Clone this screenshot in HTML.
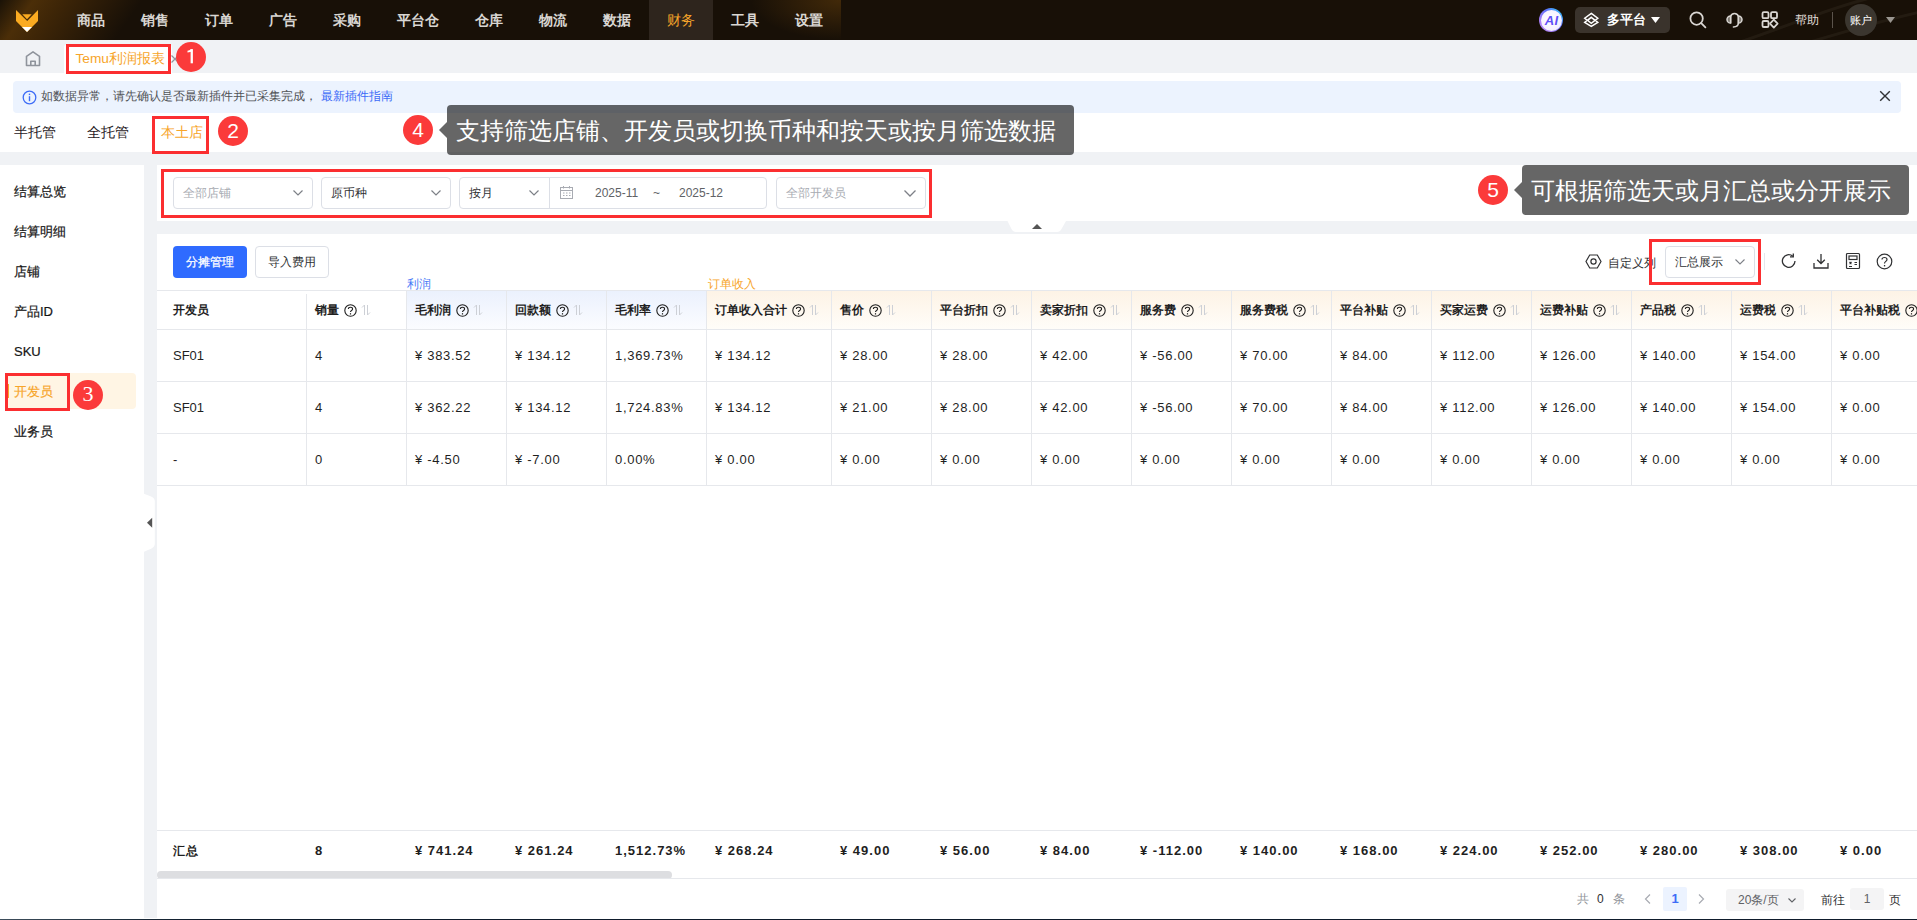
<!DOCTYPE html>
<html><head><meta charset="utf-8">
<style>
*{box-sizing:border-box;margin:0;padding:0}
html,body{width:1917px;height:920px;overflow:hidden;background:#f0f2f5;font-family:"Liberation Sans",sans-serif;color:#303133}
.a{position:absolute}
.t{position:absolute;white-space:nowrap;line-height:1}
#top{left:0;top:0;width:1917px;height:40px;background:#181007;overflow:hidden}
.nav{top:0;height:40px;line-height:40px;font-size:14px;font-weight:bold;color:#d9d6d2;text-align:center}
.circ{position:absolute;width:30px;height:30px;border-radius:50%;background:#fb3a3a;color:#fff;font-size:21px;line-height:30px;text-align:center}
.rbox{position:absolute;border:3px solid #fb2e30}
.tip{position:absolute;background:rgba(0,0,0,.6);border-radius:4px;color:#fff;font-size:24px;line-height:52px;white-space:nowrap}
.tip:before{content:"";position:absolute;left:-8px;top:17px;border-right:8px solid rgba(0,0,0,.6);border-top:8px solid transparent;border-bottom:8px solid transparent}
.menu{position:absolute;left:14px;font-size:13px;font-weight:normal;-webkit-text-stroke:.2px currentColor;color:#151515;line-height:16px}
.sel{position:absolute;top:177px;height:32px;border:1px solid #dcdfe6;border-radius:4px;background:#fff}
.sel .tx{position:absolute;left:9px;top:0;line-height:30px;font-size:12px;color:#303133}
.sel .ph{color:#a8abb2}
.chev{position:absolute}
.hl{left:157px;width:1760px;height:1px;background:#e6e8ec}
.vl{width:1px;background:#e6e8ec}
.th{height:39px;display:flex;align-items:center;font-size:12px;font-weight:bold;color:#1f1f1f;white-space:nowrap;padding-top:1px}
.th .q{margin-left:5px}
.th .srt{margin-left:4px}
.td{height:52px;line-height:52px;padding-top:1px;font-size:13px;color:#1f1f1f;white-space:nowrap;letter-spacing:.7px}
.tf{height:41px;line-height:41px;padding-top:0;font-size:13px;font-weight:bold;color:#1f1f1f;white-space:nowrap;letter-spacing:1px}
</style></head><body>

<!-- TOP BAR -->
<div id="top" class="a">
  <div class="a" style="left:0;top:0;width:170px;height:40px;background:linear-gradient(125deg,#1a1207 0%,#4b2e08 17%,#3d2507 32%,rgba(24,16,7,0) 72%)"></div>
  <div class="a" style="left:741px;top:0;width:100px;height:40px;background:radial-gradient(ellipse 90px 40px at 100% 0%,rgba(80,50,10,.75) 0%,rgba(24,16,7,0) 100%)"></div>
  <svg class="a" style="left:0;top:0" width="60" height="40" viewBox="0 0 60 40">
    <polygon fill="#fbab21" points="16,10 27.2,21 38,10 38,21 27,32 16,21"/>
    <polygon fill="#fbab21" points="22.3,14.2 31.7,14.2 27,19.3"/>
    <polygon fill="#fff" points="22,27 32,27 27,32"/>
  </svg>
  <div class="t nav" style="left:59px;width:64px">商品</div>
  <div class="t nav" style="left:123px;width:64px">销售</div>
  <div class="t nav" style="left:187px;width:64px">订单</div>
  <div class="t nav" style="left:251px;width:64px">广告</div>
  <div class="t nav" style="left:315px;width:64px">采购</div>
  <div class="t nav" style="left:379px;width:78px">平台仓</div>
  <div class="t nav" style="left:457px;width:64px">仓库</div>
  <div class="t nav" style="left:521px;width:64px">物流</div>
  <div class="t nav" style="left:585px;width:64px">数据</div>
  <div class="t nav" style="left:649px;width:64px;background:#2e251d;color:#f7a52a;font-weight:normal">财务</div>
  <div class="t nav" style="left:713px;width:64px">工具</div>
  <div class="t nav" style="left:777px;width:64px">设置</div>
  <svg class="a" style="left:1700px;top:0" width="217" height="40" viewBox="0 0 217 40" fill="none" stroke="rgba(255,235,210,.05)" stroke-width="3"><path d="M40 42 C90 25 130 8 170 -2"/><path d="M110 42 C150 30 185 20 220 12"/></svg>
  <!-- right -->
  <div class="a" style="left:1539px;top:8px;width:24px;height:24px;border-radius:50%;background:linear-gradient(225deg,#2fe3ff 0%,#5a6ff8 38%,#a77ef6 75%,#c49af7 100%);"></div>
  <div class="a" style="left:1540.5px;top:9.5px;width:21px;height:21px;border-radius:50%;background:radial-gradient(circle at 45% 45%,#fff 0%,#f6f2ff 60%,#e6dcff 100%)"></div>
  <div class="t" style="left:1541px;top:13.5px;width:21px;text-align:center;font-size:13px;font-weight:bold;font-style:italic;color:#5f4ff6;letter-spacing:0.3px">AI</div>
  <div class="a" style="left:1575px;top:7px;width:95px;height:26px;border-radius:5px;background:#3a332c"></div>
  <svg class="a" style="left:1582px;top:11px" width="18" height="18" viewBox="0 0 18 18" fill="none" stroke="#fff" stroke-width="1.5" stroke-linejoin="miter">
    <path d="M9.3 2.4 L15.8 7.2 L13.3 9.3 L15.8 11.4 L9.3 15.4 L2.7 11.4 L5.2 9.3 L2.7 7.2 Z"/><path d="M9.3 6.3 L13.1 9.3 L9.3 12.3 L5.5 9.3 Z"/>
  </svg>
  <div class="t" style="left:1607px;top:13px;font-size:13px;font-weight:bold;color:#fff">多平台</div>
  <svg class="a" style="left:1651px;top:17px" width="10" height="7" viewBox="0 0 10 7"><polygon fill="#fff" points="0,0 9,0 4.5,6"/></svg>
  <svg class="a" style="left:1688px;top:10px" width="20" height="20" viewBox="0 0 20 20" fill="none" stroke="#d9d6d2" stroke-width="1.8"><circle cx="8.6" cy="8.6" r="6.2"/><path d="M13.2 13.2 L17.4 17.4" stroke-linecap="round"/></svg>
  <svg class="a" style="left:1724px;top:10px" width="20" height="20" viewBox="0 0 20 20" fill="none" stroke="#d9d6d2" stroke-width="1.5"><path d="M6.6 12.8 V6.6 A4 4 0 0 1 14.4 6.6 V12.8 C14.4 15.3 12.3 16.9 9.4 16.9" stroke-linecap="round"/><path d="M6.6 5.9 A3.6 3.6 0 0 0 6.6 13.1 Z" fill="#7d7972"/><path d="M14.4 5.9 A3.6 3.6 0 0 1 14.4 13.1 Z" fill="#7d7972"/></svg>
  <svg class="a" style="left:1760px;top:10px" width="20" height="20" viewBox="0 0 20 20" fill="none" stroke="#d9d6d2" stroke-width="1.8"><rect x="2.5" y="2.2" width="6" height="6" rx="1.3"/><rect x="11" y="2.2" width="6" height="6" rx="1.3"/><rect x="2.5" y="11" width="6" height="6" rx="1.3"/><path d="M13.8 9.6 L17.6 13.6 L13.8 17.6 L10 13.6 Z" stroke-linejoin="round"/></svg>
  <div class="t" style="left:1795px;top:14px;font-size:12px;color:#e0ddd8">帮助</div>
  <div class="a" style="left:1832px;top:12px;width:1px;height:16px;background:#5b534b"></div>
  <div class="a" style="left:1845px;top:4px;width:32px;height:32px;border-radius:50%;background:#3b362f"></div>
  <div class="t" style="left:1850px;top:15px;font-size:11px;color:#fff">账户</div>
  <svg class="a" style="left:1886px;top:17px" width="10" height="7" viewBox="0 0 10 7"><polygon fill="#9a9690" points="0,0 9,0 4.5,6"/></svg>
</div>
<div class="a" style="left:0;top:40px;width:1917px;height:33px;background:#f0f2f5"></div>
<div class="a" style="left:0;top:73px;width:1917px;height:79px;background:#fff"></div>
<div class="a" style="left:13px;top:81px;width:1888px;height:32px;background:#ecf3fe;border-radius:4px"></div>


<!-- TABS BAR -->
<svg class="a" style="left:24px;top:50px" width="18" height="17" viewBox="0 0 18 17" fill="none" stroke="#8f949c" stroke-width="1.6" stroke-linejoin="round"><path d="M2.5 6.3 L9 1.8 L15.5 6.3 V15.5 H2.5 Z"/><path d="M6.8 15.5 V11.2 H11.2 V15.5"/></svg>
<div class="a" style="left:64px;top:44px;width:108px;height:29px;background:#fff;border-radius:4px 4px 0 0"></div>
<div class="t" style="left:75.5px;top:52px;font-size:13.7px;color:#f7a52a">Temu利润报表</div>
<svg class="a" style="left:170px;top:54px" width="10" height="10" viewBox="0 0 10 10" stroke="#909399" stroke-width="1.2"><path d="M1.5 1.5 L8.5 8.5 M8.5 1.5 L1.5 8.5"/></svg>
<div class="rbox" style="left:66px;top:44px;width:105px;height:30px"></div>
<div class="circ" style="left:176px;top:42px"><svg class="a" style="left:0;top:0" width="30" height="30" viewBox="0 0 30 30" fill="#fff"><rect x="14.6" y="7.3" width="2.3" height="14"/><path d="M14.6 7.3 L16.9 7.3 L16 9 C15 10 13.5 10.4 11.5 10.4 L11.5 8.7 C13 8.6 14 8.2 14.6 7.3 Z"/></svg></div>

<!-- ALERT -->
<svg class="a" style="left:22px;top:90px" width="15" height="15" viewBox="0 0 15 15"><circle cx="7.5" cy="7.5" r="6.3" fill="none" stroke="#3d6cf7" stroke-width="1.3"/><rect x="6.8" y="6.2" width="1.4" height="5" fill="#3d6cf7"/><rect x="6.8" y="3.6" width="1.4" height="1.5" fill="#3d6cf7"/></svg>
<div class="t" style="left:41px;top:90px;font-size:12px;color:#505256">如数据异常，请先确认是否最新插件并已采集完成，</div>
<div class="t" style="left:321px;top:90px;font-size:12px;color:#3d6cf7">最新插件指南</div>
<svg class="a" style="left:1879px;top:90px" width="12" height="12" viewBox="0 0 12 12" stroke="#303133" stroke-width="1.4"><path d="M1.2 1.2 L10.8 10.8 M10.8 1.2 L1.2 10.8"/></svg>

<!-- SUB TABS -->
<div class="t" style="left:14px;top:125px;font-size:14px;color:#1f2024">半托管</div>
<div class="t" style="left:87px;top:125px;font-size:14px;color:#1f2024">全托管</div>
<div class="t" style="left:161px;top:125px;font-size:14px;color:#f7a52a">本土店</div>
<div class="rbox" style="left:152px;top:116px;width:57px;height:38px"></div>
<div class="circ" style="left:218px;top:116px">2</div>

<div class="circ" style="left:403px;top:115px">4</div>
<div class="tip" style="left:447px;top:105px;width:627px;height:50px;padding-left:9px">支持筛选店铺、开发员或切换币种和按天或按月筛选数据</div>

<!-- SIDEBAR -->
<div class="a" style="left:0;top:165px;width:144px;height:755px;background:#fff"></div>

<div class="menu" style="top:184px">结算总览</div>
<div class="menu" style="top:224px">结算明细</div>
<div class="menu" style="top:264px">店铺</div>
<div class="menu" style="top:304px">产品ID</div>
<div class="menu" style="top:344px">SKU</div>
<div class="a" style="left:5px;top:373px;width:131px;height:36px;background:#fff5e4;border-radius:4px"></div>
<div class="a" style="left:7px;top:384px;width:2px;height:14px;background:#f7a52a"></div>
<div class="menu" style="top:384px;color:#f7a52a">开发员</div>
<div class="menu" style="top:424px">业务员</div>
<div class="rbox" style="left:5px;top:373px;width:65px;height:38px"></div>
<div class="circ" style="left:73px;top:380px;font-family:'Liberation Serif',serif;font-size:22px;line-height:27px">3</div>
<!-- collapse handle -->
<svg class="a" style="left:140px;top:490px" width="17" height="66" viewBox="0 0 17 66"><path d="M3.5 3.5 C10 6 14.8 7 14.8 11 V54 C14.8 58 10 59 3.5 62 Z" fill="#fff"/><polygon points="7,32.8 12.2,27.8 12.2,37.8" fill="#555"/></svg>

<!-- FILTER CARD -->
<div class="a" style="left:157px;top:165px;width:1760px;height:56px;background:#fff"></div>
<!-- FILTER CONTENT -->
<div class="rbox" style="left:161px;top:169px;width:771px;height:49px"></div>
<div class="sel" style="left:173px;width:140px"><div class="tx ph">全部店铺</div></div>
<div class="sel" style="left:321px;width:130px"><div class="tx">原币种</div></div>
<div class="sel" style="left:459px;width:308px"><div class="tx">按月</div>
  <div class="a" style="left:89px;top:0;width:1px;height:30px;background:#dcdfe6"></div>
  <div class="tx" style="left:135px;color:#606266">2025-11</div>
  <div class="tx" style="left:193px;color:#606266">~</div>
  <div class="tx" style="left:219px;color:#606266">2025-12</div>
</div>
<div class="sel" style="left:776px;width:150px"><div class="tx ph">全部开发员</div></div>
<svg class="a" style="left:292px;top:189px" width="12" height="8" viewBox="0 0 12 8" fill="none" stroke="#7d8087" stroke-width="1.2"><path d="M1.5 1.5 L6 6 L10.5 1.5"/></svg>
<svg class="a" style="left:430px;top:189px" width="12" height="8" viewBox="0 0 12 8" fill="none" stroke="#7d8087" stroke-width="1.2"><path d="M1.5 1.5 L6 6 L10.5 1.5"/></svg>
<svg class="a" style="left:528px;top:189px" width="12" height="8" viewBox="0 0 12 8" fill="none" stroke="#7d8087" stroke-width="1.2"><path d="M1.5 1.5 L6 6 L10.5 1.5"/></svg>
<svg class="a" style="left:903px;top:189px" width="14" height="9" viewBox="0 0 14 9" fill="none" stroke="#7d8087" stroke-width="1.3"><path d="M1.5 1.5 L7 7 L12.5 1.5"/></svg>
<svg class="a" style="left:559px;top:185px" width="15" height="15" viewBox="0 0 15 15" fill="none" stroke="#a8abb2" stroke-width="1"><rect x="1.5" y="2.5" width="12" height="11"/><path d="M1.5 5.5 H13.5 M4.5 1 V3.5 M10.5 1 V3.5"/><path d="M4 8 h1.5 M7 8 h1.5 M10 8 h1.5 M4 10.5 h1.5 M7 10.5 h1.5 M10 10.5 h1.5"/></svg>
<!-- collapse tab -->
<svg class="a" style="left:1006px;top:221px" width="62" height="12" viewBox="0 0 62 12"><path d="M1.5 0 L5.5 8 Q7 11 10 11 H51 Q54 11 55.5 8 L60 0 Z" fill="#fff"/><polygon points="26,8 36,8 31,3" fill="#555"/></svg>
<div class="circ" style="left:1478px;top:175px">5</div>
<div class="tip" style="left:1522px;top:165px;width:387px;height:50px;padding-left:9px">可根据筛选天或月汇总或分开展示</div>

<!-- TABLE CARD -->
<div class="a" style="left:157px;top:234px;width:1760px;height:684px;background:#fff"></div>

<!-- TABLE TOOLBAR -->
<div class="a" style="left:173px;top:246px;width:74px;height:32px;background:#2f6bff;border-radius:4px;color:#fff;font-size:12px;line-height:32px;text-align:center;-webkit-text-stroke:.25px #fff">分摊管理</div>
<div class="a" style="left:255px;top:246px;width:74px;height:32px;background:#fff;border:1px solid #dcdfe6;border-radius:4px;color:#303133;font-size:12px;line-height:30px;text-align:center">导入费用</div>
<svg class="a" style="left:1585px;top:254px" width="17" height="15" viewBox="0 0 17 15" fill="none" stroke="#303133" stroke-width="1.2"><path d="M4.7 1 H12.3 L16 7.5 L12.3 14 H4.7 L1 7.5 Z"/><circle cx="8.5" cy="7.5" r="2.6"/></svg>
<div class="t" style="left:1608px;top:257px;font-size:12px;color:#303133">自定义列</div>
<div class="a" style="left:1665px;top:246px;width:90px;height:32px;background:#fff;border:1px solid #dcdfe6;border-radius:4px"></div>
<div class="t" style="left:1675px;top:256px;font-size:12px;color:#303133">汇总展示</div>
<svg class="a" style="left:1734px;top:258px" width="12" height="8" viewBox="0 0 12 8" fill="none" stroke="#7d8087" stroke-width="1.1"><path d="M1.5 1.5 L6 6 L10.5 1.5"/></svg>
<div class="rbox" style="left:1649px;top:239px;width:112px;height:46px"></div>
<div class="a" style="left:1764px;top:253px;width:1px;height:17px;background:#e4e7ed"></div>
<svg class="a" style="left:1780px;top:252px" width="18" height="18" viewBox="0 0 18 18" fill="none" stroke="#303133" stroke-width="1.3"><path d="M15 9 A6.3 6.3 0 1 1 12.8 4.2"/><path d="M13.3 1.5 V4.8 H10"/></svg>
<svg class="a" style="left:1812px;top:252px" width="18" height="18" viewBox="0 0 18 18" fill="none" stroke="#303133" stroke-width="1.3"><path d="M9 2 V11.5 M5.2 7.8 L9 11.5 L12.8 7.8"/><path d="M2 11 V16 H16 V11"/></svg>
<svg class="a" style="left:1845px;top:252px" width="16" height="18" viewBox="0 0 16 18" fill="none" stroke="#303133" stroke-width="1.2"><rect x="1.5" y="1.5" width="13" height="15" rx="1"/><rect x="4" y="4" width="8" height="3.5"/><path d="M4.5 10 L6.5 12 M6.5 10 L4.5 12 M9.5 10.5 H12 M9.5 12.5 H12 M4 14.5 H7"/></svg>
<svg class="a" style="left:1876px;top:253px" width="17" height="17" viewBox="0 0 17 17" fill="none" stroke="#303133" stroke-width="1.2"><circle cx="8.5" cy="8.5" r="7.3"/><path d="M6 6.5 C6 3.8 11 3.8 11 6.5 C11 8.3 8.5 8.5 8.5 10.5"/><rect x="7.9" y="12" width="1.3" height="1.4" fill="#303133" stroke="none"/></svg>

<!-- TABLE -->
<div class="a" style="left:407px;top:291px;width:299px;height:38px;background:linear-gradient(#ebf1fd,#fbfcff)"></div>
<div class="a" style="left:707px;top:291px;width:1210px;height:38px;background:linear-gradient(#fdf3e6,#fffdf9)"></div>
<div class="a hl" style="top:290px"></div>
<div class="a hl" style="top:329px"></div>
<div class="a hl" style="top:381px"></div>
<div class="a hl" style="top:433px"></div>
<div class="a hl" style="top:485px"></div>
<div class="a vl" style="left:306px;top:294px;height:191px"></div>
<div class="a vl" style="left:406px;top:290px;height:195px"></div>
<div class="a vl" style="left:506px;top:290px;height:195px"></div>
<div class="a vl" style="left:606px;top:290px;height:195px"></div>
<div class="a vl" style="left:706px;top:290px;height:195px"></div>
<div class="a vl" style="left:831px;top:290px;height:195px"></div>
<div class="a vl" style="left:931px;top:290px;height:195px"></div>
<div class="a vl" style="left:1031px;top:290px;height:195px"></div>
<div class="a vl" style="left:1131px;top:290px;height:195px"></div>
<div class="a vl" style="left:1231px;top:290px;height:195px"></div>
<div class="a vl" style="left:1331px;top:290px;height:195px"></div>
<div class="a vl" style="left:1431px;top:290px;height:195px"></div>
<div class="a vl" style="left:1531px;top:290px;height:195px"></div>
<div class="a vl" style="left:1631px;top:290px;height:195px"></div>
<div class="a vl" style="left:1731px;top:290px;height:195px"></div>
<div class="a vl" style="left:1831px;top:290px;height:195px"></div>
<div class="t" style="left:407px;top:278px;font-size:12px;color:#4a7bf7">利润</div>
<div class="t" style="left:708px;top:278px;font-size:12px;color:#f7a52a">订单收入</div>
<div class="a th" style="left:173px;top:290px">开发员</div>
<div class="a td" style="left:173px;top:329px;letter-spacing:0">SF01</div>
<div class="a td" style="left:173px;top:381px;letter-spacing:0">SF01</div>
<div class="a td" style="left:173px;top:433px;letter-spacing:0">-</div>
<div class="a tf" style="left:173px;top:830px;font-size:12px;padding-top:1px">汇总</div>
<div class="a th" style="left:315px;top:290px">销量<svg class="q" width="13" height="13" viewBox="0 0 13 13"><circle cx="6.5" cy="6.5" r="5.7" fill="none" stroke="#1f1f1f" stroke-width="1.1"/><path d="M4.4 5 C4.4 2.7 8.6 2.7 8.6 5 C8.6 6.4 6.5 6.5 6.5 7.9" fill="none" stroke="#1f1f1f" stroke-width="1.1"/><rect x="5.9" y="9.2" width="1.2" height="1.3" fill="#1f1f1f"/></svg><svg class="srt" width="10" height="12" viewBox="0 0 10 12" fill="none" stroke="#cdd0d6" stroke-width="1"><path d="M3.5 11 V1 L1 3.5"/><path d="M6.5 1 V11 L9 8.5"/></svg></div>
<div class="a td" style="left:315px;top:329px">4</div>
<div class="a td" style="left:315px;top:381px">4</div>
<div class="a td" style="left:315px;top:433px">0</div>
<div class="a tf" style="left:315px;top:830px">8</div>
<div class="a th" style="left:415px;top:290px">毛利润<svg class="q" width="13" height="13" viewBox="0 0 13 13"><circle cx="6.5" cy="6.5" r="5.7" fill="none" stroke="#1f1f1f" stroke-width="1.1"/><path d="M4.4 5 C4.4 2.7 8.6 2.7 8.6 5 C8.6 6.4 6.5 6.5 6.5 7.9" fill="none" stroke="#1f1f1f" stroke-width="1.1"/><rect x="5.9" y="9.2" width="1.2" height="1.3" fill="#1f1f1f"/></svg><svg class="srt" width="10" height="12" viewBox="0 0 10 12" fill="none" stroke="#cdd0d6" stroke-width="1"><path d="M3.5 11 V1 L1 3.5"/><path d="M6.5 1 V11 L9 8.5"/></svg></div>
<div class="a td" style="left:415px;top:329px">¥ 383.52</div>
<div class="a td" style="left:415px;top:381px">¥ 362.22</div>
<div class="a td" style="left:415px;top:433px">¥ -4.50</div>
<div class="a tf" style="left:415px;top:830px">¥ 741.24</div>
<div class="a th" style="left:515px;top:290px">回款额<svg class="q" width="13" height="13" viewBox="0 0 13 13"><circle cx="6.5" cy="6.5" r="5.7" fill="none" stroke="#1f1f1f" stroke-width="1.1"/><path d="M4.4 5 C4.4 2.7 8.6 2.7 8.6 5 C8.6 6.4 6.5 6.5 6.5 7.9" fill="none" stroke="#1f1f1f" stroke-width="1.1"/><rect x="5.9" y="9.2" width="1.2" height="1.3" fill="#1f1f1f"/></svg><svg class="srt" width="10" height="12" viewBox="0 0 10 12" fill="none" stroke="#cdd0d6" stroke-width="1"><path d="M3.5 11 V1 L1 3.5"/><path d="M6.5 1 V11 L9 8.5"/></svg></div>
<div class="a td" style="left:515px;top:329px">¥ 134.12</div>
<div class="a td" style="left:515px;top:381px">¥ 134.12</div>
<div class="a td" style="left:515px;top:433px">¥ -7.00</div>
<div class="a tf" style="left:515px;top:830px">¥ 261.24</div>
<div class="a th" style="left:615px;top:290px">毛利率<svg class="q" width="13" height="13" viewBox="0 0 13 13"><circle cx="6.5" cy="6.5" r="5.7" fill="none" stroke="#1f1f1f" stroke-width="1.1"/><path d="M4.4 5 C4.4 2.7 8.6 2.7 8.6 5 C8.6 6.4 6.5 6.5 6.5 7.9" fill="none" stroke="#1f1f1f" stroke-width="1.1"/><rect x="5.9" y="9.2" width="1.2" height="1.3" fill="#1f1f1f"/></svg><svg class="srt" width="10" height="12" viewBox="0 0 10 12" fill="none" stroke="#cdd0d6" stroke-width="1"><path d="M3.5 11 V1 L1 3.5"/><path d="M6.5 1 V11 L9 8.5"/></svg></div>
<div class="a td" style="left:615px;top:329px">1,369.73%</div>
<div class="a td" style="left:615px;top:381px">1,724.83%</div>
<div class="a td" style="left:615px;top:433px">0.00%</div>
<div class="a tf" style="left:615px;top:830px">1,512.73%</div>
<div class="a th" style="left:715px;top:290px">订单收入合计<svg class="q" width="13" height="13" viewBox="0 0 13 13"><circle cx="6.5" cy="6.5" r="5.7" fill="none" stroke="#1f1f1f" stroke-width="1.1"/><path d="M4.4 5 C4.4 2.7 8.6 2.7 8.6 5 C8.6 6.4 6.5 6.5 6.5 7.9" fill="none" stroke="#1f1f1f" stroke-width="1.1"/><rect x="5.9" y="9.2" width="1.2" height="1.3" fill="#1f1f1f"/></svg><svg class="srt" width="10" height="12" viewBox="0 0 10 12" fill="none" stroke="#cdd0d6" stroke-width="1"><path d="M3.5 11 V1 L1 3.5"/><path d="M6.5 1 V11 L9 8.5"/></svg></div>
<div class="a td" style="left:715px;top:329px">¥ 134.12</div>
<div class="a td" style="left:715px;top:381px">¥ 134.12</div>
<div class="a td" style="left:715px;top:433px">¥ 0.00</div>
<div class="a tf" style="left:715px;top:830px">¥ 268.24</div>
<div class="a th" style="left:840px;top:290px">售价<svg class="q" width="13" height="13" viewBox="0 0 13 13"><circle cx="6.5" cy="6.5" r="5.7" fill="none" stroke="#1f1f1f" stroke-width="1.1"/><path d="M4.4 5 C4.4 2.7 8.6 2.7 8.6 5 C8.6 6.4 6.5 6.5 6.5 7.9" fill="none" stroke="#1f1f1f" stroke-width="1.1"/><rect x="5.9" y="9.2" width="1.2" height="1.3" fill="#1f1f1f"/></svg><svg class="srt" width="10" height="12" viewBox="0 0 10 12" fill="none" stroke="#cdd0d6" stroke-width="1"><path d="M3.5 11 V1 L1 3.5"/><path d="M6.5 1 V11 L9 8.5"/></svg></div>
<div class="a td" style="left:840px;top:329px">¥ 28.00</div>
<div class="a td" style="left:840px;top:381px">¥ 21.00</div>
<div class="a td" style="left:840px;top:433px">¥ 0.00</div>
<div class="a tf" style="left:840px;top:830px">¥ 49.00</div>
<div class="a th" style="left:940px;top:290px">平台折扣<svg class="q" width="13" height="13" viewBox="0 0 13 13"><circle cx="6.5" cy="6.5" r="5.7" fill="none" stroke="#1f1f1f" stroke-width="1.1"/><path d="M4.4 5 C4.4 2.7 8.6 2.7 8.6 5 C8.6 6.4 6.5 6.5 6.5 7.9" fill="none" stroke="#1f1f1f" stroke-width="1.1"/><rect x="5.9" y="9.2" width="1.2" height="1.3" fill="#1f1f1f"/></svg><svg class="srt" width="10" height="12" viewBox="0 0 10 12" fill="none" stroke="#cdd0d6" stroke-width="1"><path d="M3.5 11 V1 L1 3.5"/><path d="M6.5 1 V11 L9 8.5"/></svg></div>
<div class="a td" style="left:940px;top:329px">¥ 28.00</div>
<div class="a td" style="left:940px;top:381px">¥ 28.00</div>
<div class="a td" style="left:940px;top:433px">¥ 0.00</div>
<div class="a tf" style="left:940px;top:830px">¥ 56.00</div>
<div class="a th" style="left:1040px;top:290px">卖家折扣<svg class="q" width="13" height="13" viewBox="0 0 13 13"><circle cx="6.5" cy="6.5" r="5.7" fill="none" stroke="#1f1f1f" stroke-width="1.1"/><path d="M4.4 5 C4.4 2.7 8.6 2.7 8.6 5 C8.6 6.4 6.5 6.5 6.5 7.9" fill="none" stroke="#1f1f1f" stroke-width="1.1"/><rect x="5.9" y="9.2" width="1.2" height="1.3" fill="#1f1f1f"/></svg><svg class="srt" width="10" height="12" viewBox="0 0 10 12" fill="none" stroke="#cdd0d6" stroke-width="1"><path d="M3.5 11 V1 L1 3.5"/><path d="M6.5 1 V11 L9 8.5"/></svg></div>
<div class="a td" style="left:1040px;top:329px">¥ 42.00</div>
<div class="a td" style="left:1040px;top:381px">¥ 42.00</div>
<div class="a td" style="left:1040px;top:433px">¥ 0.00</div>
<div class="a tf" style="left:1040px;top:830px">¥ 84.00</div>
<div class="a th" style="left:1140px;top:290px">服务费<svg class="q" width="13" height="13" viewBox="0 0 13 13"><circle cx="6.5" cy="6.5" r="5.7" fill="none" stroke="#1f1f1f" stroke-width="1.1"/><path d="M4.4 5 C4.4 2.7 8.6 2.7 8.6 5 C8.6 6.4 6.5 6.5 6.5 7.9" fill="none" stroke="#1f1f1f" stroke-width="1.1"/><rect x="5.9" y="9.2" width="1.2" height="1.3" fill="#1f1f1f"/></svg><svg class="srt" width="10" height="12" viewBox="0 0 10 12" fill="none" stroke="#cdd0d6" stroke-width="1"><path d="M3.5 11 V1 L1 3.5"/><path d="M6.5 1 V11 L9 8.5"/></svg></div>
<div class="a td" style="left:1140px;top:329px">¥ -56.00</div>
<div class="a td" style="left:1140px;top:381px">¥ -56.00</div>
<div class="a td" style="left:1140px;top:433px">¥ 0.00</div>
<div class="a tf" style="left:1140px;top:830px">¥ -112.00</div>
<div class="a th" style="left:1240px;top:290px">服务费税<svg class="q" width="13" height="13" viewBox="0 0 13 13"><circle cx="6.5" cy="6.5" r="5.7" fill="none" stroke="#1f1f1f" stroke-width="1.1"/><path d="M4.4 5 C4.4 2.7 8.6 2.7 8.6 5 C8.6 6.4 6.5 6.5 6.5 7.9" fill="none" stroke="#1f1f1f" stroke-width="1.1"/><rect x="5.9" y="9.2" width="1.2" height="1.3" fill="#1f1f1f"/></svg><svg class="srt" width="10" height="12" viewBox="0 0 10 12" fill="none" stroke="#cdd0d6" stroke-width="1"><path d="M3.5 11 V1 L1 3.5"/><path d="M6.5 1 V11 L9 8.5"/></svg></div>
<div class="a td" style="left:1240px;top:329px">¥ 70.00</div>
<div class="a td" style="left:1240px;top:381px">¥ 70.00</div>
<div class="a td" style="left:1240px;top:433px">¥ 0.00</div>
<div class="a tf" style="left:1240px;top:830px">¥ 140.00</div>
<div class="a th" style="left:1340px;top:290px">平台补贴<svg class="q" width="13" height="13" viewBox="0 0 13 13"><circle cx="6.5" cy="6.5" r="5.7" fill="none" stroke="#1f1f1f" stroke-width="1.1"/><path d="M4.4 5 C4.4 2.7 8.6 2.7 8.6 5 C8.6 6.4 6.5 6.5 6.5 7.9" fill="none" stroke="#1f1f1f" stroke-width="1.1"/><rect x="5.9" y="9.2" width="1.2" height="1.3" fill="#1f1f1f"/></svg><svg class="srt" width="10" height="12" viewBox="0 0 10 12" fill="none" stroke="#cdd0d6" stroke-width="1"><path d="M3.5 11 V1 L1 3.5"/><path d="M6.5 1 V11 L9 8.5"/></svg></div>
<div class="a td" style="left:1340px;top:329px">¥ 84.00</div>
<div class="a td" style="left:1340px;top:381px">¥ 84.00</div>
<div class="a td" style="left:1340px;top:433px">¥ 0.00</div>
<div class="a tf" style="left:1340px;top:830px">¥ 168.00</div>
<div class="a th" style="left:1440px;top:290px">买家运费<svg class="q" width="13" height="13" viewBox="0 0 13 13"><circle cx="6.5" cy="6.5" r="5.7" fill="none" stroke="#1f1f1f" stroke-width="1.1"/><path d="M4.4 5 C4.4 2.7 8.6 2.7 8.6 5 C8.6 6.4 6.5 6.5 6.5 7.9" fill="none" stroke="#1f1f1f" stroke-width="1.1"/><rect x="5.9" y="9.2" width="1.2" height="1.3" fill="#1f1f1f"/></svg><svg class="srt" width="10" height="12" viewBox="0 0 10 12" fill="none" stroke="#cdd0d6" stroke-width="1"><path d="M3.5 11 V1 L1 3.5"/><path d="M6.5 1 V11 L9 8.5"/></svg></div>
<div class="a td" style="left:1440px;top:329px">¥ 112.00</div>
<div class="a td" style="left:1440px;top:381px">¥ 112.00</div>
<div class="a td" style="left:1440px;top:433px">¥ 0.00</div>
<div class="a tf" style="left:1440px;top:830px">¥ 224.00</div>
<div class="a th" style="left:1540px;top:290px">运费补贴<svg class="q" width="13" height="13" viewBox="0 0 13 13"><circle cx="6.5" cy="6.5" r="5.7" fill="none" stroke="#1f1f1f" stroke-width="1.1"/><path d="M4.4 5 C4.4 2.7 8.6 2.7 8.6 5 C8.6 6.4 6.5 6.5 6.5 7.9" fill="none" stroke="#1f1f1f" stroke-width="1.1"/><rect x="5.9" y="9.2" width="1.2" height="1.3" fill="#1f1f1f"/></svg><svg class="srt" width="10" height="12" viewBox="0 0 10 12" fill="none" stroke="#cdd0d6" stroke-width="1"><path d="M3.5 11 V1 L1 3.5"/><path d="M6.5 1 V11 L9 8.5"/></svg></div>
<div class="a td" style="left:1540px;top:329px">¥ 126.00</div>
<div class="a td" style="left:1540px;top:381px">¥ 126.00</div>
<div class="a td" style="left:1540px;top:433px">¥ 0.00</div>
<div class="a tf" style="left:1540px;top:830px">¥ 252.00</div>
<div class="a th" style="left:1640px;top:290px">产品税<svg class="q" width="13" height="13" viewBox="0 0 13 13"><circle cx="6.5" cy="6.5" r="5.7" fill="none" stroke="#1f1f1f" stroke-width="1.1"/><path d="M4.4 5 C4.4 2.7 8.6 2.7 8.6 5 C8.6 6.4 6.5 6.5 6.5 7.9" fill="none" stroke="#1f1f1f" stroke-width="1.1"/><rect x="5.9" y="9.2" width="1.2" height="1.3" fill="#1f1f1f"/></svg><svg class="srt" width="10" height="12" viewBox="0 0 10 12" fill="none" stroke="#cdd0d6" stroke-width="1"><path d="M3.5 11 V1 L1 3.5"/><path d="M6.5 1 V11 L9 8.5"/></svg></div>
<div class="a td" style="left:1640px;top:329px">¥ 140.00</div>
<div class="a td" style="left:1640px;top:381px">¥ 140.00</div>
<div class="a td" style="left:1640px;top:433px">¥ 0.00</div>
<div class="a tf" style="left:1640px;top:830px">¥ 280.00</div>
<div class="a th" style="left:1740px;top:290px">运费税<svg class="q" width="13" height="13" viewBox="0 0 13 13"><circle cx="6.5" cy="6.5" r="5.7" fill="none" stroke="#1f1f1f" stroke-width="1.1"/><path d="M4.4 5 C4.4 2.7 8.6 2.7 8.6 5 C8.6 6.4 6.5 6.5 6.5 7.9" fill="none" stroke="#1f1f1f" stroke-width="1.1"/><rect x="5.9" y="9.2" width="1.2" height="1.3" fill="#1f1f1f"/></svg><svg class="srt" width="10" height="12" viewBox="0 0 10 12" fill="none" stroke="#cdd0d6" stroke-width="1"><path d="M3.5 11 V1 L1 3.5"/><path d="M6.5 1 V11 L9 8.5"/></svg></div>
<div class="a td" style="left:1740px;top:329px">¥ 154.00</div>
<div class="a td" style="left:1740px;top:381px">¥ 154.00</div>
<div class="a td" style="left:1740px;top:433px">¥ 0.00</div>
<div class="a tf" style="left:1740px;top:830px">¥ 308.00</div>
<div class="a th" style="left:1840px;top:290px">平台补贴税<svg class="q" width="13" height="13" viewBox="0 0 13 13"><circle cx="6.5" cy="6.5" r="5.7" fill="none" stroke="#1f1f1f" stroke-width="1.1"/><path d="M4.4 5 C4.4 2.7 8.6 2.7 8.6 5 C8.6 6.4 6.5 6.5 6.5 7.9" fill="none" stroke="#1f1f1f" stroke-width="1.1"/><rect x="5.9" y="9.2" width="1.2" height="1.3" fill="#1f1f1f"/></svg><svg class="srt" width="10" height="12" viewBox="0 0 10 12" fill="none" stroke="#cdd0d6" stroke-width="1"><path d="M3.5 11 V1 L1 3.5"/><path d="M6.5 1 V11 L9 8.5"/></svg></div>
<div class="a td" style="left:1840px;top:329px">¥ 0.00</div>
<div class="a td" style="left:1840px;top:381px">¥ 0.00</div>
<div class="a td" style="left:1840px;top:433px">¥ 0.00</div>
<div class="a tf" style="left:1840px;top:830px">¥ 0.00</div>

<div class="a hl" style="top:830px"></div>
<div class="a" style="left:157px;top:871px;width:515px;height:8px;background:#dddee1;border-radius:4px"></div>
<div class="a hl" style="top:878px"></div>

<!-- PAGINATION -->
<div class="t" style="left:1577px;top:893px;font-size:12px;color:#909399">共</div>
<div class="t" style="left:1597px;top:893px;font-size:12px;color:#303133">0</div>
<div class="t" style="left:1613px;top:893px;font-size:12px;color:#909399">条</div>
<svg class="a" style="left:1643px;top:893px" width="9" height="12" viewBox="0 0 9 12" fill="none" stroke="#a8abb2" stroke-width="1.2"><path d="M7 1.5 L2.5 6 L7 10.5"/></svg>
<div class="a" style="left:1663px;top:887px;width:24px;height:24px;background:#ecf3ff;border-radius:2px;color:#3d6cf7;font-size:13px;font-weight:bold;line-height:24px;text-align:center">1</div>
<svg class="a" style="left:1697px;top:893px" width="9" height="12" viewBox="0 0 9 12" fill="none" stroke="#a8abb2" stroke-width="1.2"><path d="M2 1.5 L6.5 6 L2 10.5"/></svg>
<div class="a" style="left:1726px;top:889px;width:78px;height:22px;background:#f4f4f5;border-radius:3px"></div>
<div class="t" style="left:1738px;top:894px;font-size:12px;color:#606266">20条/页</div>
<svg class="a" style="left:1787px;top:897px" width="10" height="7" viewBox="0 0 10 7" fill="none" stroke="#606266" stroke-width="1.1"><path d="M1.5 1.5 L5 5 L8.5 1.5"/></svg>
<div class="t" style="left:1821px;top:894px;font-size:12px;color:#303133">前往</div>
<div class="a" style="left:1850px;top:888px;width:34px;height:22px;background:#f4f4f5;border-radius:3px;color:#606266;font-size:12px;line-height:22px;text-align:center">1</div>
<div class="t" style="left:1889px;top:894px;font-size:12px;color:#303133">页</div>

<div class="a" style="left:0;top:918px;width:1917px;height:1px;background:#fff"></div><div class="a" style="left:0;top:919px;width:1917px;height:1px;background:linear-gradient(90deg,#3e4e5c 0,#1f2f3d 120px,#0f1c2c 200px,#0f1c2c 100%)"></div>

</body></html>
